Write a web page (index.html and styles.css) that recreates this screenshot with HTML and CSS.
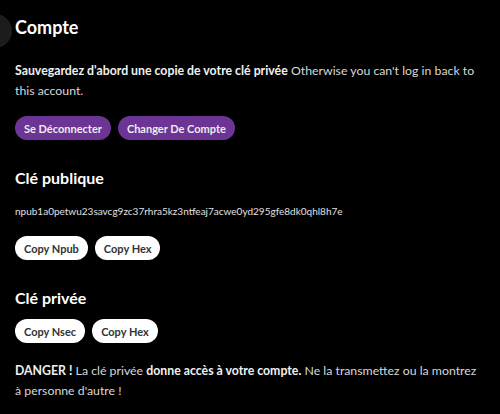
FILE: index.html
```html
<!DOCTYPE html>
<html lang="fr">
<head>
<meta charset="utf-8">
<link rel="stylesheet" href="styles.css">
</head>
<body>
<div class="avatar"></div>
<main class="page">
  <h1 class="title">Compte</h1>
  <p class="text"><b>Sauvegardez d'abord une copie de votre clé privée</b> Otherwise you can't log in back to this account.</p>
  <div class="btns btns-top">
    <button class="btn purple">Se Déconnecter</button>
    <button class="btn purple">Changer De Compte</button>
  </div>
  <h2 class="sub">Clé publique</h2>
  <p class="key">npub1a0petwu23savcg9zc37rhra5kz3ntfeaj7acwe0yd295gfe8dk0qhl8h7e</p>
  <div class="btns btns-pub">
    <button class="btn white">Copy Npub</button>
    <button class="btn white">Copy Hex</button>
  </div>
  <h2 class="sub">Clé privée</h2>
  <div class="btns btns-priv">
    <button class="btn white">Copy Nsec</button>
    <button class="btn white">Copy Hex</button>
  </div>
  <p class="text danger"><b>DANGER !</b> La clé privée <b>donne accès à votre compte.</b> Ne la transmettez ou la montrez à personne d'autre !</p>
</main>
</body>
</html>
```
FILE: styles.css
```css
html, body { margin: 0; padding: 0; background: #000; }
body { font-family: Lato, "Noto Sans", sans-serif; color: #d8d8d8; position: relative; height: 414px; overflow: hidden; }
.avatar { position: absolute; left: -22px; top: 14px; width: 34px; height: 34px; border-radius: 50%; background: #1c1c1c; }
.page { padding: 15px 15px 0 15px; }
.title { margin: 0; font-size: 18px; font-weight: 700; color: #fff; line-height: 24px; }
.text { margin: 22px 0 0; font-size: 12.3px; line-height: 20px; color: #d8d8d8; padding-right: 8px; }
.text b { font-weight: 700; color: #f0f0f0; }
.btns { display: flex; gap: 7px; }
.btns-top { margin-top: 15px; }
.btns-pub { margin-top: 18px; }
.btns-priv { margin-top: 10px; }
.btn { font-family: inherit; font-weight: 700; font-size: 11px; border: none; border-radius: 12px; height: 24px; padding: 0 9px; }
.purple { background: #6c3494; color: #ececec; }
.white { background: #fff; color: #333; }
.sub { margin: 27px 0 0; font-size: 16px; font-weight: 700; color: #fff; line-height: 22px; }
.key { margin: 15px 0 0; font-size: 10px; line-height: 14px; color: #e0e0e0; }
.danger { margin-top: 18px; }
```
